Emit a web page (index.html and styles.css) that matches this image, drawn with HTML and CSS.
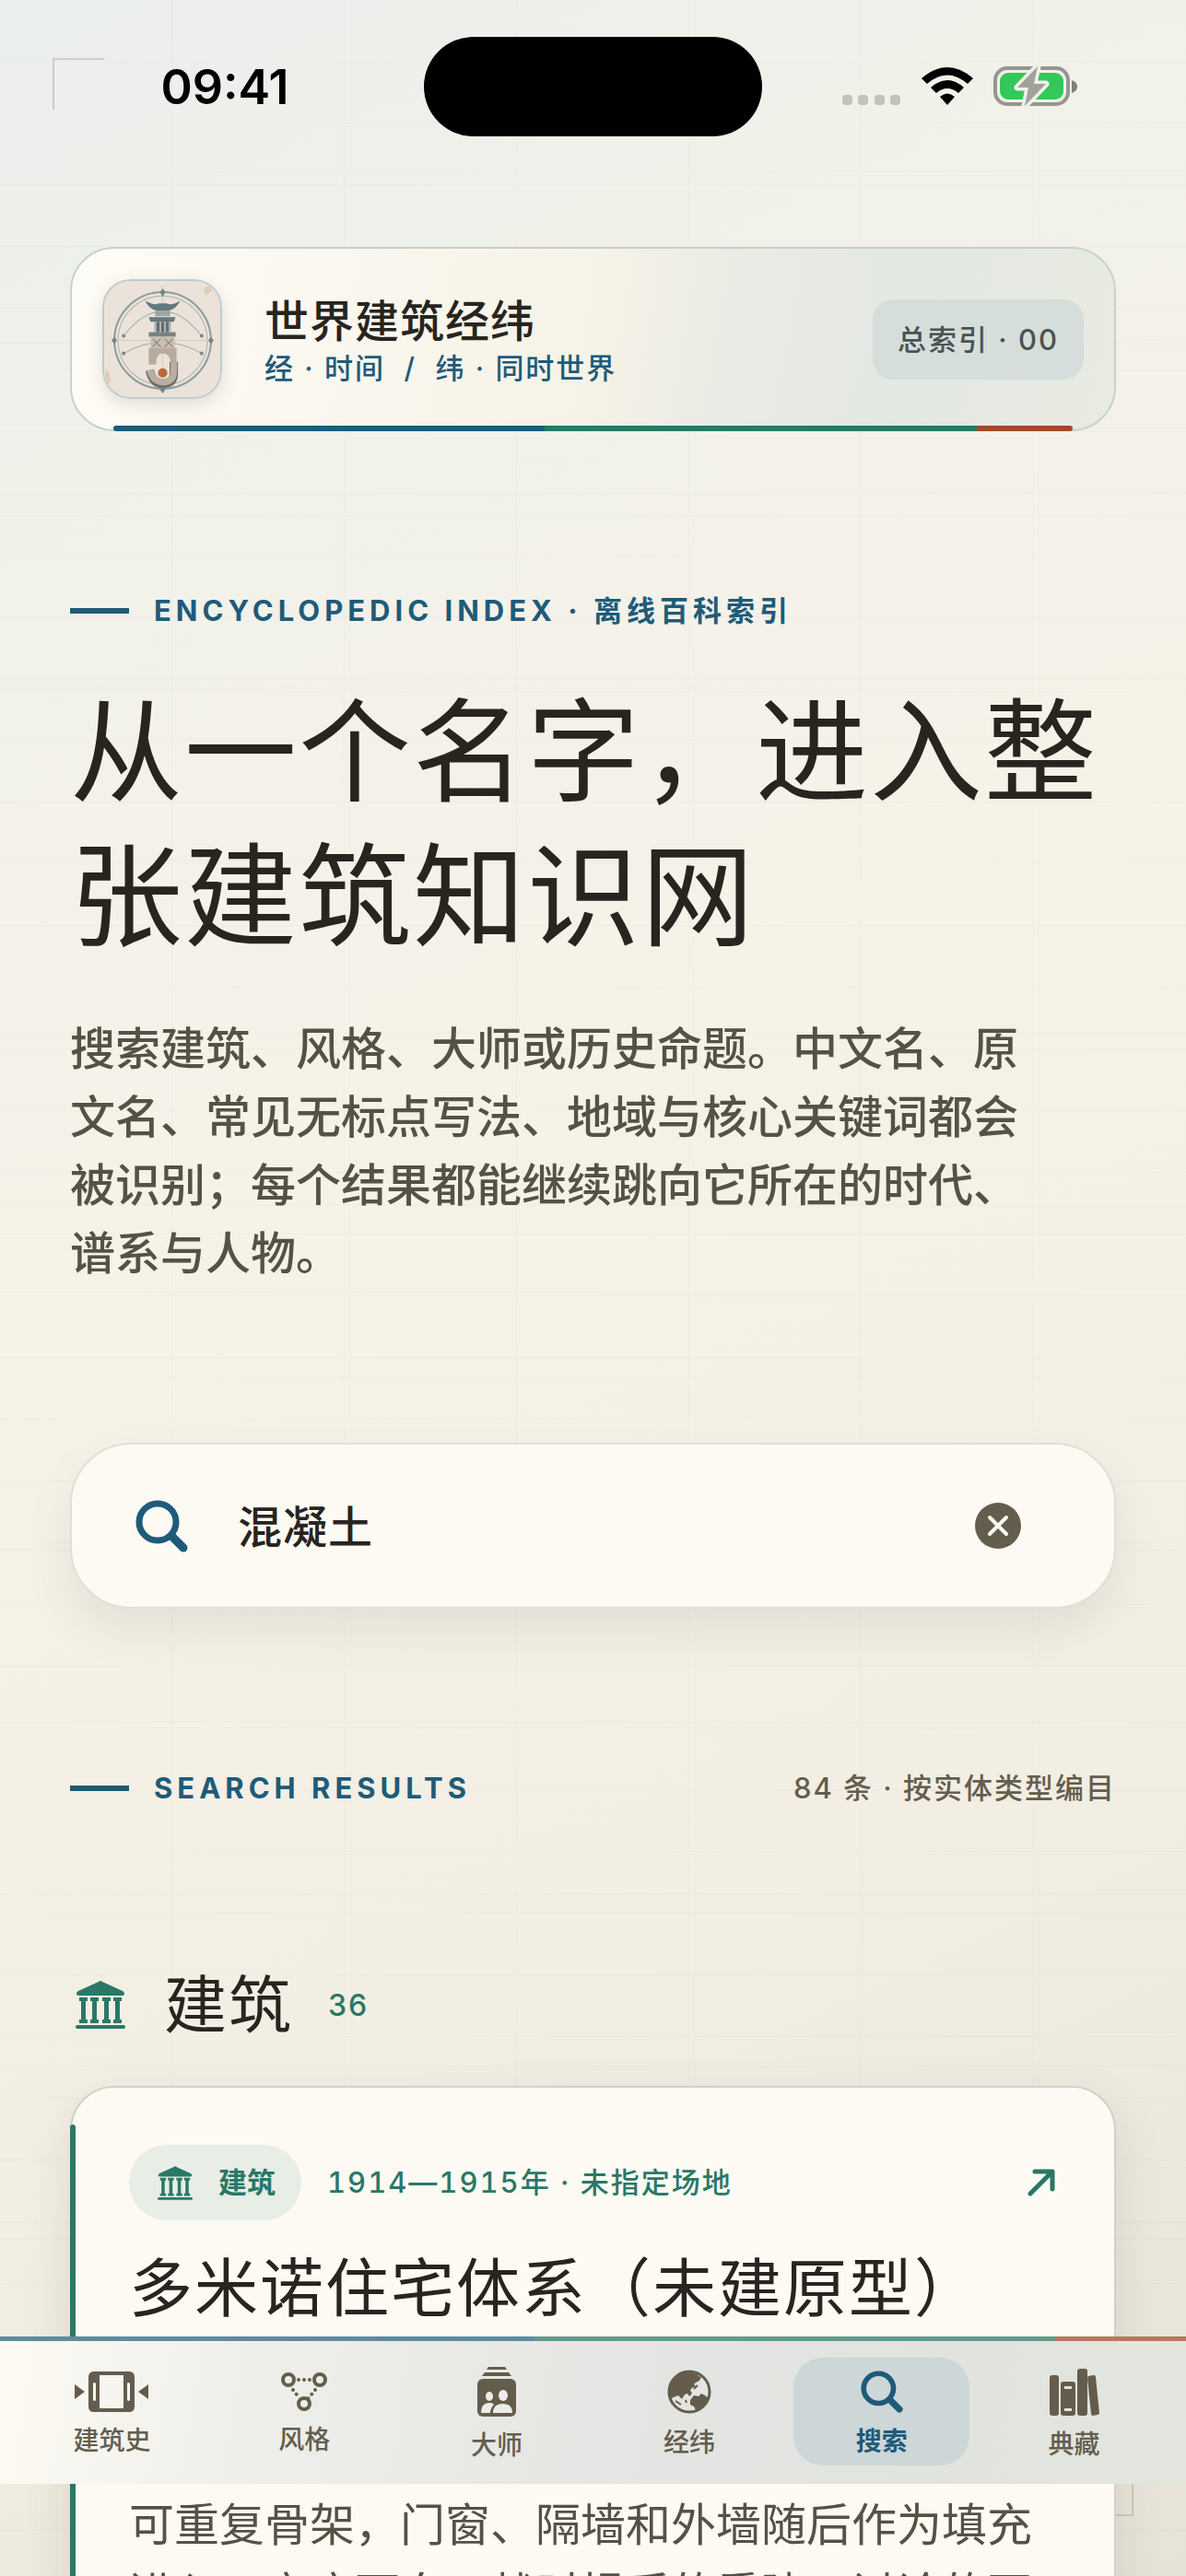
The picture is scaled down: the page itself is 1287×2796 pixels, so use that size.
FILE: index.html
```html
<!DOCTYPE html>
<html lang="zh-CN">

<head>
    <meta charset="UTF-8">
    <meta name="viewport" content="width=device-width, initial-scale=1.0">
    <title>世界建筑经纬</title>
    <link rel="stylesheet" href="styles.css">
</head>

<body>
    <!-- 公用图标 -->
    <svg class="sprite" aria-hidden="true">
        <symbol id="icon-columns" viewBox="0 0 54 52">
            <path d="M27 0 Q28 0 29 1 L51 11 Q53 12 53 14 Q53 16 51 16 H3 Q1 16 1 14 Q1 12 3 11 L25 1 Q26 0 27 0Z" />
            <path d="M4 18h9v4h-2v20h2v4h-9v-4h2v-20h-2zM16 18h9v4h-2v20h2v4h-9v-4h2v-20h-2zM29 18h9v4h-2v20h2v4h-9v-4h2v-20h-2zM41 18h9v4h-2v20h2v4h-9v-4h2v-20h-2z" />
            <rect y="48" width="54" height="4" rx="2" />
        </symbol>
        <symbol id="icon-search" viewBox="0 0 57 57">
            <circle cx="24" cy="24" r="20" fill="none" stroke="currentColor" stroke-width="7" />
            <path d="M39 39 L52 52" stroke="currentColor" stroke-width="9" stroke-linecap="round" />
        </symbol>
    </svg>

    <!-- 状态栏 -->
    <div class="status-bar">
        <div class="time">09:41</div>
        <div class="island"></div>
        <div class="signals">
            <svg width="64" height="42" viewBox="0 0 64 42" fill="#c2c2bd">
                <rect y="30" width="11" height="11" rx="4" />
                <rect x="17" y="30" width="11" height="11" rx="4" />
                <rect x="35" y="30" width="11" height="11" rx="4" />
                <rect x="52" y="30" width="11" height="11" rx="4" />
            </svg>
            <svg width="56" height="42" viewBox="0 0 56 42">
                <path d="M0 12 Q28 -12 56 12 L50 18 Q28 -1 6 18Z" />
                <path d="M10 22 Q28 6 46 22 L40 28 Q28 18 16 28Z" />
                <path d="M20 32 Q28 25 36 32 L28 41Z" />
            </svg>
            <svg width="91" height="44" viewBox="0 0 91 44">
                <rect x="2" y="2" width="79" height="39" rx="13" fill="none" stroke="#969690" stroke-width="4" />
                <rect x="7" y="7" width="69" height="29" rx="9" fill="#34c759" />
                <path d="M85 15 Q91 17 91 22 Q91 27 85 29Z" fill="#7f7f7b" />
                <path d="M48 0 L26 23 H38 L34 43 L57 19 H44Z" fill="#a2a29d" stroke="#f1f1e9" stroke-width="7" stroke-linejoin="round" paint-order="stroke" />
            </svg>
        </div>
    </div>

    <main class="page">
        <header class="brand">
            <svg class="logo" viewBox="0 0 129 129" fill="none">
                <rect x="1" y="1" width="127" height="127" rx="29" fill="#ebe2d9" stroke="#bfcccd" stroke-width="2" />
                <path d="M111 9l5-2 2 5-5 5-4-2zM3 96l4 4 2 9-3 5 4 6-5-4z" fill="#dfcdb8" />
                <circle cx="65" cy="66" r="52" stroke="#8b9c9d" stroke-width="2" />
                <circle cx="65" cy="66" r="48" stroke="#a9b1ae" />
                <path d="M65 7V123M10 66H120" stroke="#cfcdc4" />
                <path d="M23 61Q65 8 107 61M23 80Q65 56 107 80" stroke="#a3a9a6" />
                <path d="M65 10l3 4-3 5-3-5zM13 62l3 4-3 4-3-4zM117 62l3 4-3 4-3-4zM65 115l3 4-3 4-3-4z" fill="#71888b" />
                <circle cx="23" cy="61" r="2" fill="#788c8f" />
                <circle cx="107" cy="61" r="2" fill="#788c8f" />
                <circle cx="23" cy="80" r="2" fill="#788c8f" />
                <circle cx="107" cy="80" r="2" fill="#788c8f" />
                <path d="M46 23Q56 29 61 26H69Q75 29 84 23Q80 32 71 34H59Q50 32 46 23Z" fill="#62797d" />
                <path d="M57 34h16v6H57z" fill="#9ca6a3" />
                <path d="M50 41H79L77 46H52Z" fill="#67797a" />
                <path d="M56 46H74V57H56Z" fill="#b5b2a7" />
                <path d="M60 46v11M65 46v11M70 46v11" stroke="#58717c" stroke-width="3" />
                <path d="M50 57H79V62H50Z" fill="#79827f" />
                <path d="M52 62H78V74H52Z" fill="#c8bfb1" />
                <path d="M54 64l9 9M63 64l-9 9M67 64l9 9M76 64l-9 9" stroke="#817f78" />
                <path d="M50 74H80V90H74Q72 80 65 80Q58 80 58 92H50Z" fill="#b9ac9f" />
                <path d="M77 89V102Q77 112 66 113Q54 113 51 98" stroke="#6e6e69" stroke-width="9" />
                <path d="M77 89V101Q76 110 66 111Q55 111 51 98" stroke="#b9ae9f" stroke-width="7" />
                <circle cx="65" cy="101" r="5" fill="#bd6640" />
            </svg>
            <div class="brand-text">
                <strong>世界建筑经纬</strong>
                <span>经 · 时间&nbsp; / &nbsp;纬 · 同时世界</span>
            </div>
            <span class="index-tag">总索引 · 00</span>
        </header>

        <p class="eyebrow">ENCYCLOPEDIC INDEX · 离线百科索引</p>
        <h1>从一个名字，进入整张建筑知识网</h1>
        <p class="intro">搜索建筑、风格、大师或历史命题。中文名、原文名、常见无标点写法、地域与核心关键词都会被识别；每个结果都能继续跳向它所在的时代、谱系与人物。</p>

        <form class="search">
            <label for="keyword" aria-label="搜索">
                <svg width="57" height="57"><use href="#icon-search" /></svg>
            </label>
            <input type="text" id="keyword" value="混凝土">
            <button type="reset" aria-label="清除">
                <svg width="50" height="50" viewBox="0 0 50 50">
                    <circle cx="25" cy="25" r="25" fill="#645d4d" />
                    <path d="M16 16L34 34M34 16L16 34" stroke="#fdfaf3" stroke-width="4" stroke-linecap="round" />
                </svg>
            </button>
        </form>

        <div class="result-head">
            <h2 class="eyebrow">SEARCH RESULTS</h2>
            <span>84 条 · 按实体类型编目</span>
        </div>

        <div class="group-head">
            <svg width="54" height="52"><use href="#icon-columns" /></svg>
            <h2>建筑</h2>
            <span>36</span>
        </div>

        <article class="card">
            <div class="card-meta">
                <span class="type">
                    <svg width="38" height="37"><use href="#icon-columns" /></svg>
                    建筑
                </span>
                <span class="date">1914—1915年 · 未指定场地</span>
                <a href="#domino" aria-label="查看">
                    <svg width="30" height="30" viewBox="0 0 30 30" fill="none" stroke="currentColor" stroke-width="5" stroke-linecap="round" stroke-linejoin="round">
                        <path d="M3 27L26 4M8 3H27V22" />
                    </svg>
                </a>
            </div>
            <h3>多米诺住宅体系（未建原型）</h3>
            <p>可重复骨架，门窗、隔墙和外墙随后作为填充进入。它应面向一战时损后的重建，讨论的不</p>
        </article>
    </main>

    <!-- 底部导航 -->
    <nav class="tab-bar">
        <a href="#history">
            <svg width="80" height="44" viewBox="0 0 80 44">
                <path d="M0 14L11 22L0 30ZM80 14L69 22L80 30Z" />
                <path fill-rule="evenodd" d="M21 0H59Q65 0 65 6V38Q65 44 59 44H21Q15 44 15 38V6Q15 0 21 0ZM27 4V40H53V4ZM20 13V31Q22 33 23 31V13Q21 11 20 13ZM57 13V31Q59 33 60 31V13Q58 11 57 13Z" />
            </svg>
            建筑史
        </a>
        <a href="#style">
            <svg width="50" height="42" viewBox="0 0 50 42" fill="none" stroke="currentColor">
                <g stroke-width="4">
                    <circle cx="8" cy="8" r="6" />
                    <circle cx="42" cy="8" r="6" />
                    <circle cx="25" cy="34" r="6" />
                </g>
                <path d="M19 8H32M13 19L20 28M37 19L29 29" stroke-width="4" stroke-linecap="round" stroke-dasharray="0 6" />
            </svg>
            风格
        </a>
        <a href="#master">
            <svg width="42" height="54" viewBox="0 0 42 54">
                <path d="M12 0H30L32 3H10ZM8 6H34L37 10H5Z" />
                <rect y="13" width="42" height="41" rx="6" />
                <g fill="#ecece9">
                    <ellipse cx="13" cy="32" rx="4" ry="5" />
                    <ellipse cx="28" cy="31" rx="5" ry="6" />
                    <path d="M4 50Q4 39 13 39Q17 39 18 41Q14 45 14 50ZM17 50Q17 40 28 40Q38 40 38 50Z" />
                </g>
            </svg>
            大师
        </a>
        <a href="#atlas">
            <svg width="48" height="48" viewBox="0 0 48 48">
                <circle cx="24" cy="24" r="22" fill="none" stroke="currentColor" stroke-width="3" />
                <path d="M31 3L34 7L37 8L35 12L31 14L29 16L31 18L27 20L25 22L27 26L24 29L22 26L19 27L16 32L12 28L7 30L3 32Q-1 12 12 5Q20 0 31 3Z" />
                <path d="M25 33L29 28L34 29L37 26L41 28L45 31Q40 42 31 44L29 40L25 38Z" />
                <path d="M9 34L15 38M29 21L33 17M20 33L21 36" stroke="currentColor" stroke-width="2" />
            </svg>
            经纬
        </a>
        <a href="#search" class="active">
            <svg width="46" height="46"><use href="#icon-search" /></svg>
            搜索
        </a>
        <a href="#collection">
            <svg width="54" height="51" viewBox="0 0 54 51">
                <rect y="7" width="10" height="44" rx="3" />
                <path fill-rule="evenodd" d="M15 14H25Q28 14 28 17V48Q28 51 25 51H15Q12 51 12 48V17Q12 14 15 14ZM16 19V22H24V19ZM16 43V46H24V43Z" />
                <rect x="30" width="11" height="51" rx="3" />
                <path d="M42 8L48 7Q50 7 50 9L54 48Q54 50 52 50L47 51Q45 51 45 49L41 10Z" />
            </svg>
            典藏
        </a>
    </nav>
</body>

</html>
```
FILE: styles.css
```css
* {
    margin: 0;
    padding: 0;
    box-sizing: border-box;
}

body {
    position: relative;
    height: 100vh;
    overflow: hidden;
    font-family: Inter, "Noto Sans CJK SC", sans-serif;
    color: #28241f;
    /* 经纬网格 + 纸张底色 */
    background:
        repeating-linear-gradient(90deg, transparent 0 186px, rgba(30, 90, 100, 0.03) 186px 187px),
        repeating-linear-gradient(180deg, transparent 0 185px, rgba(30, 90, 100, 0.02) 185px 187px),
        repeating-linear-gradient(180deg, transparent 0 66px, rgba(80, 80, 60, 0.03) 66px 67px),
        linear-gradient(155deg, #eaeeec 0%, #f1f1ea 16%, #f6f2e8 42%, #f2eee3 72%, #e7e2d7 100%);
}

/* 页面两个角标 */
body::before,
body::after {
    content: "";
    position: absolute;
    width: 54px;
    height: 54px;
}

body::before {
    top: 63px;
    left: 57px;
    border-top: 2px solid #cccec8;
    border-left: 2px solid #cccec8;
}

body::after {
    right: 57px;
    bottom: 65px;
    z-index: -1;
    border-right: 2px solid #cdc8bc;
    border-bottom: 2px solid #cdc8bc;
}

a {
    color: inherit;
    text-decoration: none;
}

svg {
    display: block;
    flex: none;
}

svg:not([fill]) {
    fill: currentColor;
}

.sprite {
    position: absolute;
    width: 0;
    height: 0;
}

/* 状态栏 */
.status-bar {
    display: grid;
    grid-template-columns: 1fr 367px 1fr;
    align-items: center;
    height: 188px;
    color: #000;
}

.time {
    padding-left: 28px;
    font-size: 52px;
    font-weight: 600;
    text-align: center;
}

.island {
    height: 108px;
    border-radius: 54px;
    background: #000;
}

.signals {
    display: flex;
    align-items: center;
    gap: 22px;
    padding-left: 87px;
}

.page {
    padding: 80px 76px 0;
}

/* 顶部品牌卡片 */
.brand {
    position: relative;
    display: flex;
    align-items: center;
    height: 200px;
    padding: 0 33px;
    border: 2px solid #c5d2d1;
    border-radius: 48px;
    background: linear-gradient(100deg, #fefcf6 0%, #f6f2e7 50%, #eaebe4 62%, #e3e8e2 80%, #e8ebe1 100%);
}

.brand::after {
    content: "";
    position: absolute;
    left: 45px;
    right: 45px;
    bottom: -2px;
    height: 6px;
    border-radius: 3px;
    background: linear-gradient(90deg, #1e5b7a 45%, #2a7866 45% 90%, #a04a28 90%);
}

.logo {
    width: 130px;
    height: 130px;
    border-radius: 30px;
    box-shadow: 0 6px 18px rgba(60, 70, 60, 0.15);
}

.brand-text {
    flex: 1;
    margin-left: 46px;
    padding-top: 4px;
}

.brand-text strong,
.brand-text span {
    display: block;
}

.brand-text strong {
    font-size: 48px;
    font-weight: 500;
    line-height: 60px;
    letter-spacing: 1px;
}

.brand-text span {
    font-size: 31px;
    font-weight: 500;
    line-height: 42px;
    letter-spacing: 2px;
    color: #1e5b7a;
}

.index-tag {
    padding: 0 27px;
    border-radius: 22px;
    font-size: 31px;
    font-weight: 500;
    line-height: 87px;
    letter-spacing: 2px;
    color: #4a5352;
    background: #d5deda;
}

/* 标题区 */
.eyebrow {
    display: flex;
    align-items: center;
    gap: 27px;
    font-size: 31px;
    font-weight: 700;
    line-height: 40px;
    letter-spacing: 5px;
    color: #1e5b7a;
}

.eyebrow::before {
    content: "";
    width: 64px;
    height: 6px;
    background: #1e5b7a;
}

.brand + .eyebrow {
    margin-top: 175px;
}

h1 {
    margin-top: 54px;
    font-size: 122px;
    font-weight: 400;
    line-height: 157px;
    letter-spacing: 2px;
}

.intro {
    max-width: 1060px;
    margin-top: 51px;
    font-size: 49px;
    font-weight: 500;
    line-height: 74px;
    color: #565145;
}

/* 搜索框 */
.search {
    display: flex;
    align-items: center;
    height: 180px;
    margin-top: 168px;
    padding: 0 101px 0 69px;
    border: 2px solid #e2dfd6;
    border-radius: 66px;
    background: #fdfaf3;
    box-shadow: 0 24px 48px rgba(90, 90, 80, 0.1);
}

.search label {
    color: #1e5b7a;
}

.search input {
    flex: 1;
    min-width: 0;
    height: 60px;
    margin: 0 54px;
    padding-bottom: 4px;
    border: none;
    outline: none;
    font: 500 48px "Noto Sans CJK SC", sans-serif;
    letter-spacing: 1px;
    color: #28241f;
    background: none;
}

.search button {
    border: none;
    background: none;
}

/* 结果列表 */
.result-head {
    display: flex;
    justify-content: space-between;
    margin-top: 175px;
}

.result-head > span {
    font-size: 31px;
    font-weight: 500;
    line-height: 40px;
    letter-spacing: 2px;
    color: #645d4d;
}

.group-head {
    display: flex;
    align-items: center;
    margin-top: 175px;
    padding-left: 6px;
    color: #2a7866;
}

.group-head h2 {
    margin: 0 38px 0 42px;
    font-size: 68px;
    font-weight: 400;
    line-height: 80px;
    letter-spacing: 2px;
    color: #28241f;
}

.group-head span {
    font-size: 32px;
    font-weight: 500;
    letter-spacing: 2px;
}

.card {
    position: relative;
    margin-top: 48px;
    padding: 62px;
    border: 2px solid #d3d0c6;
    border-radius: 48px;
    background: #fdfaf3;
    box-shadow: 0 20px 50px rgba(90, 85, 70, 0.15);
}

.card::before {
    content: "";
    position: absolute;
    top: 40px;
    bottom: 40px;
    left: -2px;
    width: 6px;
    border-radius: 3px;
    background: #2a7866;
}

.card-meta {
    display: flex;
    align-items: center;
    color: #2a7866;
}

.type {
    display: flex;
    align-items: center;
    gap: 28px;
    padding: 0 28px 0 31px;
    border-radius: 41px;
    font-size: 31px;
    font-weight: 700;
    line-height: 82px;
    background: #e8ede6;
}

.date {
    flex: 1;
    margin-left: 28px;
    font-size: 31px;
    font-weight: 500;
    font-variant-numeric: tabular-nums;
    line-height: 82px;
    letter-spacing: 2px;
}

.card-meta a {
    margin-right: 2px;
}

.card h3 {
    margin-top: 29px;
    font-size: 69px;
    font-weight: 400;
    line-height: 90px;
    letter-spacing: 2px;
}

.card p {
    margin-top: 174px;
    font-size: 49px;
    line-height: 75px;
    color: #565145;
}

/* 底部导航 */
.tab-bar {
    position: fixed;
    left: 0;
    right: 0;
    bottom: 100px;
    display: grid;
    grid-template-columns: repeat(6, 1fr);
    gap: 18px;
    height: 160px;
    padding: 23px 26px 20px;
    color: #645d4d;
    background:
        linear-gradient(90deg, #5f8b9e 45%, #639a8b 45% 89%, #bb765c 89%) top / 100% 5px no-repeat,
        linear-gradient(100deg, #fdfaf3 0%, #eeeeea 22%, #e4e5e2 55%, #e1e3df 80%, #e3e5de 100%);
}

.tab-bar a {
    display: flex;
    flex-direction: column;
    align-items: center;
    justify-content: center;
    gap: 13px;
    padding-top: 6px;
    border-radius: 32px;
    font-size: 28px;
    font-weight: 500;
    line-height: 36px;
}

.tab-bar .active {
    font-weight: 700;
    color: #1e5b7a;
    background: #cdd7d8;
}
```
